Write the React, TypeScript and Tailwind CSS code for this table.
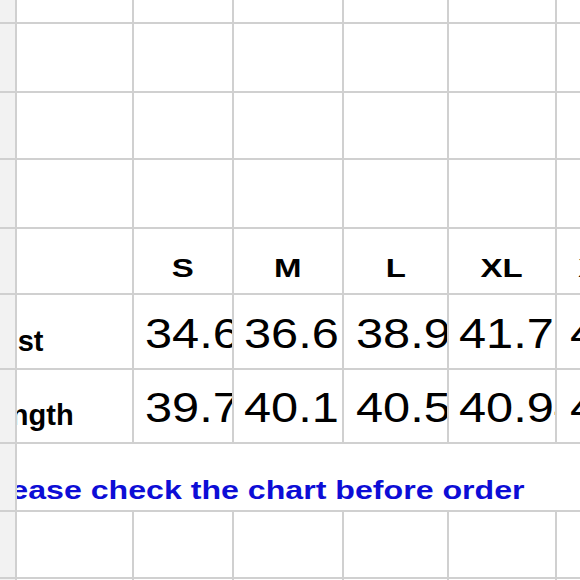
const sizes = ["S", "M", "L", "XL", "XXL"];

// left padding of each size column, as read from the chart
const pads = ["pl-[11px]", "pl-[10px]", "pl-[12px]", "pl-[10px]", "pl-[13px]"];

const measures = [
  { label: "Bust", shift: "ml-[-38px]", values: ["34.6", "36.6", "38.9", "41.7", "44.1"] },
  { label: "Length", shift: "ml-[-40px]", values: ["39.7", "40.1", "40.5", "40.94", "41.3"] },
];

function Gutter() {
  return <div className="bg-[#f2f2f2]" />;
}

function EmptyRow() {
  return (
    <>
      <Gutter />
      {Array.from({ length: 6 }).map((_, i) => (
        <div key={i} className="bg-white" />
      ))}
    </>
  );
}

export default function App() {
  return (
    <div className="h-[580px] w-[580px] overflow-hidden bg-white font-['Liberation_Sans',Arial,sans-serif] text-black">
      <div className="grid h-[580px] w-max grid-cols-[15px_115px_98px_108px_103px_106px_106px] grid-rows-[22px_67px_65px_67px_64px_73px_72px_66px_65px_1fr] gap-[2px] bg-[#d0d0d0]">
        <EmptyRow />
        <EmptyRow />
        <EmptyRow />
        <EmptyRow />

        {/* size header */}
        <Gutter />
        <div className="bg-white" />
        {sizes.map((s) => (
          <div key={s} className="flex items-end justify-center overflow-hidden bg-white pb-[12px]">
            <span className="inline-block scale-x-[1.27] whitespace-nowrap text-[26px] font-bold leading-none">
              {s}
            </span>
          </div>
        ))}

        {measures.map((m) => (
          <div key={m.label} className="contents">
            <Gutter />
            <div className="flex items-end overflow-hidden bg-white pb-[12px]">
              <span className={`${m.shift} inline-block whitespace-nowrap text-[29px] font-bold leading-none`}>
                {m.label}
              </span>
            </div>
            {m.values.map((v, i) => (
              <div key={i} className={`flex items-end overflow-hidden bg-white pb-[13px] ${pads[i]}`}>
                <span className="inline-block origin-left scale-x-[1.16] whitespace-nowrap text-[42px] leading-none">
                  {v}
                </span>
              </div>
            ))}
          </div>
        ))}

        {/* note spanning the table */}
        <Gutter />
        <div className="col-span-6 flex items-end overflow-hidden bg-white pb-[7px]">
          <span className="ml-[-37px] inline-block origin-left scale-x-[1.285] whitespace-nowrap text-[25px] font-bold leading-none text-[#0d0dd6]">
            Please check the chart before order
          </span>
        </div>

        <EmptyRow />
        <EmptyRow />
      </div>
    </div>
  );
}
